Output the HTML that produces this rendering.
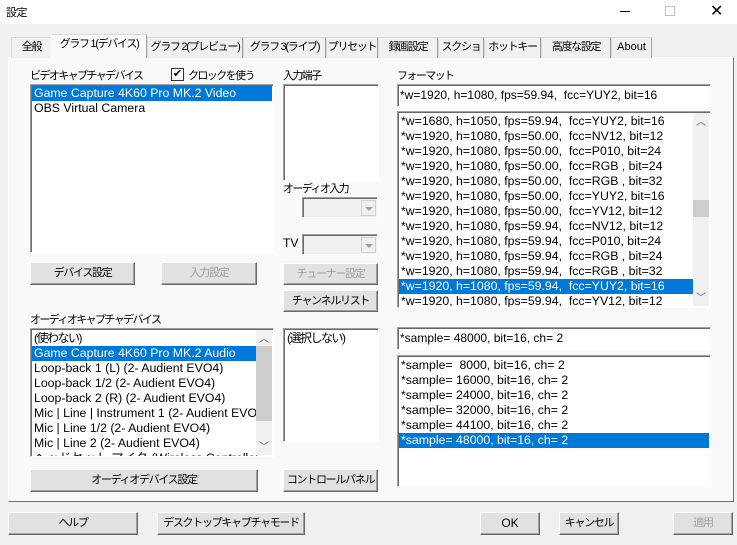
<!DOCTYPE html>
<html><head><meta charset="utf-8"><style>
*{box-sizing:border-box;margin:0;padding:0}
body{width:737px;height:545px;background:#f0f0f0;font-family:"Liberation Sans","Noto Sans CJK JP",sans-serif;font-size:12px;color:#000;position:relative;overflow:hidden}
.a{position:absolute;white-space:nowrap}
.j{font-size:11px;letter-spacing:-1.6px}
.title{left:0;top:0;width:737px;height:24px;background:#fff}
.tab{position:absolute;top:37px;height:21px;border:1px solid #d9d9d9;border-bottom:none;background:#f0f0f0;text-align:center;line-height:19px;font-size:11px;letter-spacing:-1.3px;white-space:nowrap;overflow:hidden;border-right-color:#a0a0a0}
.tab.sel{top:34px;height:24px;background:#f9f9f9;z-index:2;border-color:#d9d9d9 #a0a0a0 #f9f9f9 #fff}
.panel{left:8px;top:57px;width:726px;height:445px;border:1px solid #fff;border-right-color:#707070;border-bottom-color:#707070;background:#f9f9f9}
.box{position:absolute;background:#fff;border:1px solid;border-color:#a0a0a0 #fff #fff #a0a0a0;box-shadow:inset 1px 1px 0 #696969;overflow:hidden}
.row{height:15px;line-height:15px;padding-left:2px;white-space:nowrap;font-size:12.3px}
.row.s{background:#0078d7;color:#fff}
.btn{position:absolute;height:23px;background:#e1e1e1;border:1px solid;border-color:#fff #696969 #696969 #fff;box-shadow:inset -1px -1px 0 #a0a0a0;text-align:center;line-height:20px;font-size:11px;letter-spacing:-1.3px;white-space:nowrap;overflow:hidden}
.dis{color:#a0a0a0}
.sb{position:absolute;top:1px;bottom:1px;width:16px;background:#f0f0f0}
.combo{position:absolute;width:76px;height:21px;background:#f0f0f0;border:1px solid;border-color:#a0a0a0 #fff #fff #a0a0a0;box-shadow:inset 1px 1px 0 #696969}
.combo i{position:absolute;right:1px;top:2px;width:15px;height:16px;border:1px solid #d0d0d0;background:#f0f0f0}
.combo i:after{content:"";position:absolute;left:3px;top:6px;border:4px solid transparent;border-top:4px solid #a0a0a0}
</style></head><body>
<div class="a title"></div>
<div class="a j" style="left:6px;top:4px;letter-spacing:-0.5px">設定</div>
<div class="a" style="left:620px;top:11px;width:10px;height:1px;background:#000"></div>
<div class="a" style="left:665px;top:6px;width:10px;height:10px;border:1px solid #c0c0c0"></div>
<div class="a" style="left:710px;top:1px;font-size:16px;color:#000">✕</div>
<div class="a panel"></div>
<div class="tab" style="left:11px;width:41px">全般</div>
<div class="tab sel" style="left:51px;width:96px">グラフ 1(デバイス)</div>
<div class="tab" style="left:147px;width:96px">グラフ 2(プレビュー)</div>
<div class="tab" style="left:243px;width:83px">グラフ 3(ライブ)</div>
<div class="tab" style="left:326px;width:52px">プリセット</div>
<div class="tab" style="left:378px;width:60px">録画設定</div>
<div class="tab" style="left:438px;width:46px">スクショ</div>
<div class="tab" style="left:484px;width:57px">ホットキー</div>
<div class="tab" style="left:541px;width:70px">高度な設定</div>
<div class="tab" style="left:611px;width:41px;letter-spacing:0">About</div>

<div class="a j" style="left:30px;top:67px">ビデオキャプチャデバイス</div>
<div class="a" style="left:171px;top:68px;width:13px;height:13px;border:1px solid #333;background:#fff;font-size:11px;line-height:11px;text-align:center">✔</div>
<div class="a j" style="left:188px;top:67px">クロックを使う</div>
<div class="box" style="left:30px;top:84px;width:244px;height:169px;padding:1px">
<div class="row s">Game Capture 4K60 Pro MK.2 Video</div>
<div class="row">OBS Virtual Camera</div></div>

<div class="a j" style="left:283px;top:67px">入力端子</div>
<div class="box" style="left:283px;top:84px;width:96px;height:97px"></div>
<div class="a j" style="left:283px;top:180px">オーディオ入力</div>
<div class="combo" style="left:302px;top:197px"><i></i></div>
<div class="a" style="left:283px;top:236px">TV</div>
<div class="combo" style="left:302px;top:234px"><i></i></div>
<div class="btn dis" style="left:283px;top:263px;width:95px;height:22px">チューナー設定</div>
<div class="btn" style="left:283px;top:290px;width:95px;height:22px">チャンネルリスト</div>
<div class="btn" style="left:30px;top:262px;width:105px">デバイス設定</div>
<div class="btn dis" style="left:161px;top:262px;width:96px">入力設定</div>

<div class="a j" style="left:397px;top:67px">フォーマット</div>
<div class="box" style="left:397px;top:84px;width:314px;height:23px;padding:3px 2px 0">*w=1920, h=1080, fps=59.94,&nbsp; fcc=YUY2, bit=16</div>
<div class="box" style="left:397px;top:111px;width:314px;height:197px;padding:2px 1px">
<div style="width:295px">
<div class="row">*w=1680, h=1050, fps=59.94,&nbsp; fcc=YUY2, bit=16</div>
<div class="row">*w=1920, h=1080, fps=50.00,&nbsp; fcc=NV12, bit=12</div>
<div class="row">*w=1920, h=1080, fps=50.00,&nbsp; fcc=P010, bit=24</div>
<div class="row">*w=1920, h=1080, fps=50.00,&nbsp; fcc=RGB , bit=24</div>
<div class="row">*w=1920, h=1080, fps=50.00,&nbsp; fcc=RGB , bit=32</div>
<div class="row">*w=1920, h=1080, fps=50.00,&nbsp; fcc=YUY2, bit=16</div>
<div class="row">*w=1920, h=1080, fps=50.00,&nbsp; fcc=YV12, bit=12</div>
<div class="row">*w=1920, h=1080, fps=59.94,&nbsp; fcc=NV12, bit=12</div>
<div class="row">*w=1920, h=1080, fps=59.94,&nbsp; fcc=P010, bit=24</div>
<div class="row">*w=1920, h=1080, fps=59.94,&nbsp; fcc=RGB , bit=24</div>
<div class="row">*w=1920, h=1080, fps=59.94,&nbsp; fcc=RGB , bit=32</div>
<div class="row s">*w=1920, h=1080, fps=59.94,&nbsp; fcc=YUY2, bit=16</div>
<div class="row">*w=1920, h=1080, fps=59.94,&nbsp; fcc=YV12, bit=12</div></div>
<div class="sb" style="right:1px"><div style="position:absolute;top:0;width:16px;text-align:center;font-size:10px;color:#606060">︿</div><div style="position:absolute;top:87px;left:0;width:16px;height:17px;background:#cdcdcd"></div><div style="position:absolute;bottom:2px;width:16px;text-align:center;font-size:10px;color:#606060">﹀</div></div></div>

<div class="a j" style="left:30px;top:311px">オーディオキャプチャデバイス</div>
<div class="box" style="left:30px;top:328px;width:244px;height:129px;padding:2px 1px">
<div style="width:226px;overflow:hidden">
<div class="row"><span class="j" style="font-size:12px;letter-spacing:-1.5px">(使わない)</span></div>
<div class="row s">Game Capture 4K60 Pro MK.2 Audio</div>
<div class="row">Loop-back 1 (L) (2- Audient EVO4)</div>
<div class="row">Loop-back 1/2 (2- Audient EVO4)</div>
<div class="row">Loop-back 2 (R) (2- Audient EVO4)</div>
<div class="row">Mic | Line | Instrument 1 (2- Audient EVO4)</div>
<div class="row">Mic | Line 1/2 (2- Audient EVO4)</div>
<div class="row">Mic | Line 2 (2- Audient EVO4)</div>
<div class="row">ヘッドセット マイク (Wireless Controller)</div></div>
<div class="sb" style="right:1px"><div style="position:absolute;top:0;width:16px;text-align:center;font-size:10px;color:#606060">︿</div><div style="position:absolute;top:16px;left:0;width:16px;height:75px;background:#cdcdcd"></div><div style="position:absolute;bottom:2px;width:16px;text-align:center;font-size:10px;color:#606060">﹀</div></div></div>
<div class="box" style="left:283px;top:328px;width:96px;height:114px;padding:2px 1px"><div class="row"><span style="font-size:12px;letter-spacing:-1.5px">(選択しない)</span></div></div>
<div class="btn" style="left:30px;top:469px;width:228px">オーディオデバイス設定</div>
<div class="btn" style="left:283px;top:469px;width:95px">コントロールパネル</div>

<div class="box" style="left:397px;top:327px;width:314px;height:23px;padding:3px 2px 0">*sample= 48000, bit=16, ch= 2</div>
<div class="box" style="left:397px;top:355px;width:314px;height:132px;padding:2px 1px">
<div class="row">*sample=&nbsp; 8000, bit=16, ch= 2</div>
<div class="row">*sample= 16000, bit=16, ch= 2</div>
<div class="row">*sample= 24000, bit=16, ch= 2</div>
<div class="row">*sample= 32000, bit=16, ch= 2</div>
<div class="row">*sample= 44100, bit=16, ch= 2</div>
<div class="row s">*sample= 48000, bit=16, ch= 2</div></div>

<div class="btn" style="left:8px;top:512px;width:130px">ヘルプ</div>
<div class="btn" style="left:157px;top:512px;width:148px">デスクトップキャプチャモード</div>
<div class="btn" style="left:480px;top:512px;width:60px;letter-spacing:0;font-size:12px">OK</div>
<div class="btn" style="left:559px;top:512px;width:60px">キャンセル</div>
<div class="btn dis" style="left:673px;top:512px;width:60px">適用</div>
</body></html>
